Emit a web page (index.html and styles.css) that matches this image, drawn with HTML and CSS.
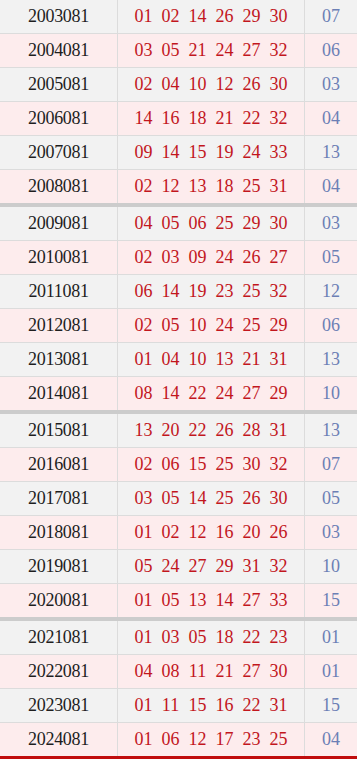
FILE: index.html
```html
<!DOCTYPE html>
<html lang="zh">
<head>
<meta charset="utf-8">
<title>081期历史开奖</title>
<link rel="stylesheet" href="styles.css">
</head>
<body>
<div class="table">
  <div class="group">
    <div class="row"><div class="issue">2003081</div><div class="reds"><span>01</span><span>02</span><span>14</span><span>26</span><span>29</span><span>30</span></div><div class="blue">07</div></div>
    <div class="row"><div class="issue">2004081</div><div class="reds"><span>03</span><span>05</span><span>21</span><span>24</span><span>27</span><span>32</span></div><div class="blue">06</div></div>
    <div class="row"><div class="issue">2005081</div><div class="reds"><span>02</span><span>04</span><span>10</span><span>12</span><span>26</span><span>30</span></div><div class="blue">03</div></div>
    <div class="row"><div class="issue">2006081</div><div class="reds"><span>14</span><span>16</span><span>18</span><span>21</span><span>22</span><span>32</span></div><div class="blue">04</div></div>
    <div class="row"><div class="issue">2007081</div><div class="reds"><span>09</span><span>14</span><span>15</span><span>19</span><span>24</span><span>33</span></div><div class="blue">13</div></div>
    <div class="row"><div class="issue">2008081</div><div class="reds"><span>02</span><span>12</span><span>13</span><span>18</span><span>25</span><span>31</span></div><div class="blue">04</div></div>
  </div>
  <div class="group">
    <div class="row"><div class="issue">2009081</div><div class="reds"><span>04</span><span>05</span><span>06</span><span>25</span><span>29</span><span>30</span></div><div class="blue">03</div></div>
    <div class="row"><div class="issue">2010081</div><div class="reds"><span>02</span><span>03</span><span>09</span><span>24</span><span>26</span><span>27</span></div><div class="blue">05</div></div>
    <div class="row"><div class="issue">2011081</div><div class="reds"><span>06</span><span>14</span><span>19</span><span>23</span><span>25</span><span>32</span></div><div class="blue">12</div></div>
    <div class="row"><div class="issue">2012081</div><div class="reds"><span>02</span><span>05</span><span>10</span><span>24</span><span>25</span><span>29</span></div><div class="blue">06</div></div>
    <div class="row"><div class="issue">2013081</div><div class="reds"><span>01</span><span>04</span><span>10</span><span>13</span><span>21</span><span>31</span></div><div class="blue">13</div></div>
    <div class="row"><div class="issue">2014081</div><div class="reds"><span>08</span><span>14</span><span>22</span><span>24</span><span>27</span><span>29</span></div><div class="blue">10</div></div>
  </div>
  <div class="group">
    <div class="row"><div class="issue">2015081</div><div class="reds"><span>13</span><span>20</span><span>22</span><span>26</span><span>28</span><span>31</span></div><div class="blue">13</div></div>
    <div class="row"><div class="issue">2016081</div><div class="reds"><span>02</span><span>06</span><span>15</span><span>25</span><span>30</span><span>32</span></div><div class="blue">07</div></div>
    <div class="row"><div class="issue">2017081</div><div class="reds"><span>03</span><span>05</span><span>14</span><span>25</span><span>26</span><span>30</span></div><div class="blue">05</div></div>
    <div class="row"><div class="issue">2018081</div><div class="reds"><span>01</span><span>02</span><span>12</span><span>16</span><span>20</span><span>26</span></div><div class="blue">03</div></div>
    <div class="row"><div class="issue">2019081</div><div class="reds"><span>05</span><span>24</span><span>27</span><span>29</span><span>31</span><span>32</span></div><div class="blue">10</div></div>
    <div class="row"><div class="issue">2020081</div><div class="reds"><span>01</span><span>05</span><span>13</span><span>14</span><span>27</span><span>33</span></div><div class="blue">15</div></div>
  </div>
  <div class="group last">
    <div class="row"><div class="issue">2021081</div><div class="reds"><span>01</span><span>03</span><span>05</span><span>18</span><span>22</span><span>23</span></div><div class="blue">01</div></div>
    <div class="row"><div class="issue">2022081</div><div class="reds"><span>04</span><span>08</span><span>11</span><span>21</span><span>27</span><span>30</span></div><div class="blue">01</div></div>
    <div class="row"><div class="issue">2023081</div><div class="reds"><span>01</span><span>11</span><span>15</span><span>16</span><span>22</span><span>31</span></div><div class="blue">15</div></div>
    <div class="row"><div class="issue">2024081</div><div class="reds"><span>01</span><span>06</span><span>12</span><span>17</span><span>23</span><span>25</span></div><div class="blue">04</div></div>
  </div>
</div>
</body>
</html>
```

FILE: styles.css
```css
html, body {
  margin: 0;
  padding: 0;
  background: #ffffff;
}

body {
  font-family: "Liberation Serif", "Noto Sans CJK SC", serif;
  font-size: 18px;
}

.table {
  display: flex;
  flex-direction: column;
  width: 357px;
}

.row {
  display: grid;
  grid-template-columns: 118px 187px 52px;
  height: 33px;
  border-bottom: 1px solid #dcdcdc;
  background: #f2f2f2;
}

.row:nth-child(even) {
  background: #fdeced;
}

.group .row:last-child {
  border-bottom: 4px solid #cccccc;
}

.group.last .row:last-child {
  border-bottom: 3px solid #c00d0d;
}

.issue,
.reds,
.blue {
  display: flex;
  align-items: center;
  justify-content: center;
  line-height: 33px;
}

.issue,
.reds {
  border-right: 1px solid #dcdcdc;
}

.issue {
  color: #1e1e1e;
  letter-spacing: -0.3px;
}

.reds {
  gap: 9px;
  color: #c2161d;
}

.reds span {
  width: 18px;
  text-align: center;
}

.blue {
  color: #6c7fb5;
}
```
